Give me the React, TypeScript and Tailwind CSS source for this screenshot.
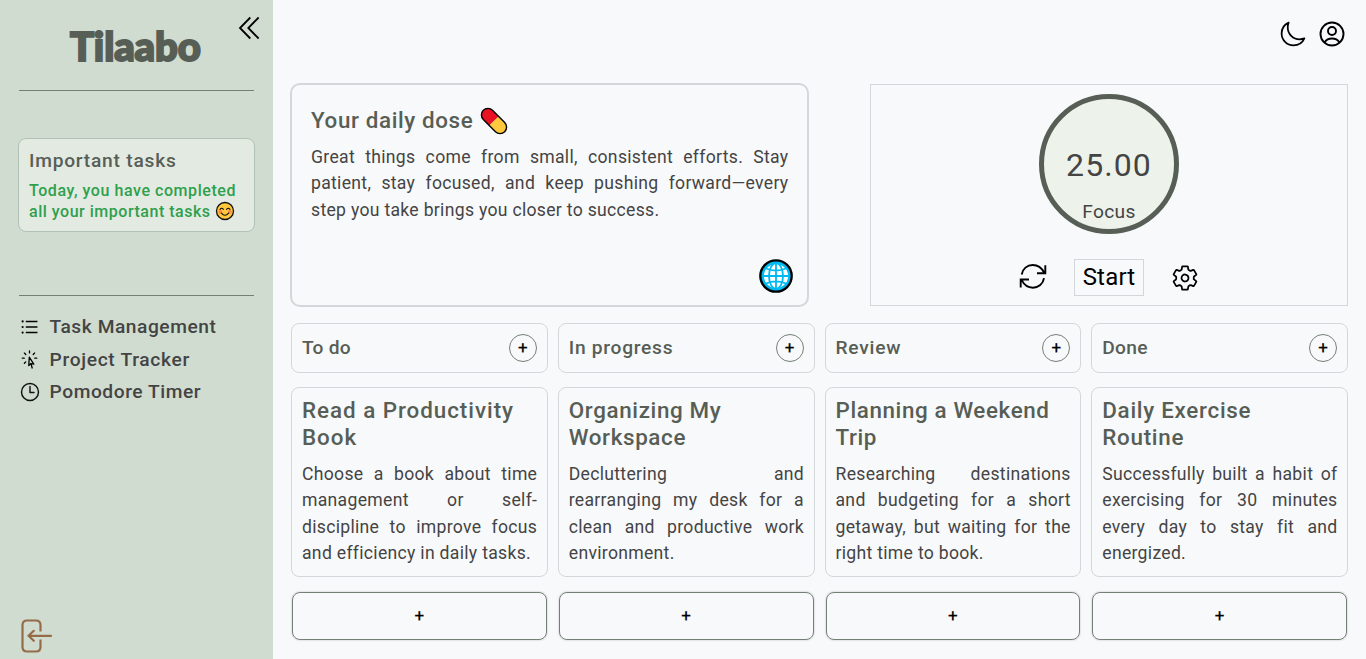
import React from 'react';
import { IoMoonOutline, IoSettingsOutline } from 'react-icons/io5';
import { HiOutlineCursorArrowRays } from 'react-icons/hi2';
import { AiOutlineUnorderedList } from 'react-icons/ai';

type Column = { name: string; nameClass: string; title: string[]; titleClass: string; lines: string[] };

const columns: Column[] = [
  {
    name: 'To do',
    nameClass: 'tracking-[0.2px]',
    title: ['Read a Productivity', 'Book'],
    titleClass: 'tracking-[0.96px]',
    lines: ['Choose a book about time', 'management or self-', 'discipline to improve focus', 'and efficiency in daily tasks.'],
  },
  {
    name: 'In progress',
    nameClass: 'tracking-[0.72px]',
    title: ['Organizing My', 'Workspace'],
    titleClass: 'tracking-[0.64px]',
    lines: ['Decluttering and', 'rearranging my desk for a', 'clean and productive work', 'environment.'],
  },
  {
    name: 'Review',
    nameClass: 'tracking-[0.75px]',
    title: ['Planning a Weekend', 'Trip'],
    titleClass: 'tracking-[0.62px]',
    lines: ['Researching destinations', 'and budgeting for a short', 'getaway, but waiting for the', 'right time to book.'],
  },
  {
    name: 'Done',
    nameClass: 'tracking-[0.3px]',
    title: ['Daily Exercise', 'Routine'],
    titleClass: 'tracking-[0.72px]',
    lines: ['Successfully built a habit of', 'exercising for 30 minutes', 'every day to stay fit and', 'energized.'],
  },
];

function Justified({ lines }: { lines: string[] }) {
  return (
    <div className="-mr-[0.5px] text-[17.6px] leading-[26.4px] tracking-[0.3px] text-[#444]">
      {lines.map((line, i) => (
        <p
          key={line}
          className={i < lines.length - 1 ? 'whitespace-nowrap text-justify [text-align-last:justify]' : 'whitespace-nowrap'}
        >
          {line}
        </p>
      ))}
    </div>
  );
}

function Pill() {
  return (
    <svg width="28" height="28" viewBox="0 0 28 28">
      <g transform="rotate(45 14 14)">
        <path d="M14 7.5H5.2a6.5 6.5 0 0 0 0 13H14Z" fill="#e81224" />
        <path d="M14 7.5h8.800a6.500 6.500 0 0 1 0 13H14Z" fill="#ffc83d" />
        <rect x="-1.100" y="7.500" width="30.200" height="13" rx="6.500" fill="none" stroke="#000" strokeWidth="1.400" />
      </g>
    </svg>
  );
}

function Smile() {
  return (
    <svg width="20" height="20" viewBox="0 0 20 20" fill="none" strokeLinecap="round">
      <circle cx="10" cy="10" r="8.5" fill="#ffc83d" stroke="#111" strokeWidth="1.3" />
      <circle cx="5.3" cy="11" r="2" fill="#f7894a" />
      <circle cx="14.7" cy="11" r="2" fill="#f7894a" />
      <path d="M5 8.4q1.7-2.2 3.4 0M11.6 8.4q1.7-2.2 3.4 0M6.4 12.2q3.6 4.2 7.2 0" stroke="#111" strokeWidth="1.1" />
    </svg>
  );
}

function Globe() {
  return (
    <svg width="34" height="34" viewBox="0 0 34 34" fill="none">
      <circle cx="17" cy="17" r="15.7" fill="#00b9f2" stroke="#000" strokeWidth="2.3" />
      <circle cx="17" cy="17" r="12.6" fill="#fff" />
      <g stroke="#00b9f2" strokeWidth="1.8">
        <circle cx="17" cy="17" r="13" />
        <ellipse cx="17" cy="17" rx="7" ry="13" />
        <path d="M17 4v26M4 17h26M6.5 9.2Q17 14 27.5 9.2M6.5 24.8Q17 20 27.5 24.8" />
      </g>
    </svg>
  );
}

function LogOut() {
  return (
    <svg width="32" height="34" viewBox="0 0 32 34" fill="none" stroke="#966b48" strokeWidth="2.2" strokeLinecap="round" strokeLinejoin="round">
      <path strokeLinecap="butt" d="M20.5 12.5V6q0-4.500-4.500-4.500H7Q2.500 1.500 2.500 6v22q0 4.500 4.500 4.500h9q4.500 0 4.500-4.500v-7.500" />
      <path d="M31 16.800H8.500M13.800 11.800l-5.300 5 5.300 5" />
    </svg>
  );
}

function Collapse() {
  return (
    <svg width="22" height="24" viewBox="0 0 22 24" fill="none" stroke="#000" strokeWidth="1.8">
      <path d="M12.300 1.500 2 12l10.300 10.500M20.600 1.500 10.300 12l10.300 10.500" />
    </svg>
  );
}

function Profile() {
  return (
    <svg width="26" height="26" viewBox="0 0 26 26" fill="none" stroke="#000" strokeWidth="1.9">
      <circle cx="13" cy="13" r="11.500" />
      <circle cx="13" cy="10" r="4" />
      <path d="M5.500 21.300Q8 17.500 13 17.500t7.500 3.800" />
    </svg>
  );
}

function Refresh() {
  return (
    <svg width="28" height="28" viewBox="0 0 28 28" fill="none" stroke="#000" strokeWidth="1.900">
      <path d="M2.700 12.500C3.500 6.800 8.200 3 13.700 3c5 0 9 2.800 11.300 7.500M26.300 3.200v8h-8.300" />
      <path d="M25 16.200c-.8 5.700-5.500 9.500-11 9.500-5 0-9-2.800-11.300-7.500M1.700 25.500v-8h8.300" />
    </svg>
  );
}

function Clock() {
  return (
    <svg width="20" height="20" viewBox="0 0 20 20" fill="none" stroke="#111" strokeWidth="1.450" strokeLinecap="round" strokeLinejoin="round">
      <circle cx="10" cy="10" r="8.500" />
      <path d="M10 4.500V10.500h4" />
    </svg>
  );
}

function Plus() {
  return (
    <span className="-mt-px text-[17px] leading-none [-webkit-text-stroke:0.2px_#000]">+</span>
  );
}

export default function App() {
  return (
    <div className="flex h-[659px] w-full overflow-hidden bg-[#f8f9fb] font-[Roboto,sans-serif] text-[#444]">
      <aside className="flex w-[273px] shrink-0 flex-col bg-[#d1dcd1] pl-[19px] pr-[13px]">
        <div className="flex h-[90px] justify-end">
          <h1 className="mr-[35px] mt-[19px] w-[133px] whitespace-nowrap font-[Lato,sans-serif] text-[40px] font-black leading-[54px] tracking-[-0.1px] text-[#575e56] [-webkit-text-stroke:2px_#575e56] [stroke-linejoin:round]">
            Tilaabo
          </h1>
          <div className="mt-[16px] shrink-0">
            <Collapse />
          </div>
        </div>
        <hr className="mr-[6px] border-[#748075]" />
        <section className="-ml-px mr-[5px] mt-[47px] h-[94px] rounded-[8px] border border-[#b2c1b5] bg-[#e3eae2] pl-[10px] pt-[8px] font-medium">
          <h2 className="text-[19.2px] leading-[27px] tracking-[0.76px] text-[#575e56]">Important tasks</h2>
          <p className="mt-[6px] whitespace-nowrap text-[16px] leading-[21px] tracking-[0.56px] text-[#2fa04c]">Today, you have completed</p>
          <p className="flex whitespace-nowrap text-[16px] leading-[21px] tracking-[0.52px] text-[#2fa04c]">
            all your important tasks
            <span className="ml-[4px]"><Smile /></span>
          </p>
        </section>
        <hr className="mr-[6px] mt-[63px] border-[#748075]" />
        <nav className="mt-[15px] flex flex-col text-[19.2px] font-medium leading-[32.6px]">
          <a className="flex items-center gap-[9.500px]">
            <AiOutlineUnorderedList className="h-[20px] w-[21px] text-black" />
            <span className="tracking-[0.54px]">Task Management</span>
          </a>
          <a className="flex items-center gap-[9.500px]">
            <HiOutlineCursorArrowRays className="h-[21px] w-[21px] text-black" />
            <span className="tracking-[0.68px]">Project Tracker</span>
          </a>
          <a className="flex items-center gap-[9.500px]">
            <span className="pl-px"><Clock /></span>
            <span className="tracking-[0.56px]">Pomodore Timer</span>
          </a>
        </nav>
        <div className="mb-[6px] ml-px mt-auto">
          <LogOut />
        </div>
      </aside>

      <main className="flex flex-1 flex-col pl-[18px] pr-[18px]">
        <header className="flex h-[83px] items-start justify-end gap-[12px] pr-[3px] pt-[20px] text-black">
          <IoMoonOutline className="h-[28px] w-[28px]" />
          <span className="mt-px"><Profile /></span>
        </header>

        <div className="flex justify-between">
          <section className="-ml-px flex h-[224px] w-[519px] flex-col rounded-[10px] border-2 border-[#d4d7d9] px-[19px] pt-[21px]">
            <h2 className="flex h-[30px] items-center gap-[7px] text-[22.4px] font-medium tracking-[0.62px] text-[#575e56]">
              Your daily dose
              <Pill />
            </h2>
            <div className="mt-[8px]">
              <Justified
                lines={[
                  'Great things come from small, consistent efforts. Stay',
                  'patient, stay focused, and keep pushing forward—every',
                  'step you take brings you closer to success.',
                ]}
              />
            </div>
            <div className="-mr-[5px] mb-[12px] mt-auto self-end">
              <Globe />
            </div>
          </section>

          <section className="mt-px flex h-[222px] w-[478px] flex-col items-center border border-[#d4d7d9] pt-[9px]">
            <div className="flex h-[140px] w-[140px] flex-col items-center rounded-full border-[5px] border-[#575e56] bg-[#edf2eb] pt-[46px]">
              <span className="text-[32px] leading-[40px] tracking-[1.1px]">25.00</span>
              <span className="mt-[15px] text-[19.2px] leading-[24px] tracking-[0.35px]">Focus</span>
            </div>
            <div className="mt-[25px] flex items-center text-black">
              <span className="-mt-[3px]"><Refresh /></span>
              <button className="ml-[27px] h-[37px] w-[70px] border border-[#d4d7d9] text-[24px] leading-[35px] tracking-[0.2px]">Start</button>
              <IoSettingsOutline className="ml-[27px] h-[28px] w-[28px]" />
            </div>
          </section>
        </div>

        <div className="mt-[16px] grid grid-cols-4 gap-[10px]">
          {columns.map((column) => (
            <section key={column.name} className="flex min-w-0 flex-col">
              <div className="flex h-[50px] items-center justify-between rounded-[8px] border border-[#d4d7d9] px-[10px]">
                <h2 className={`text-[19.2px] font-medium text-[#575e56] ${column.nameClass}`}>{column.name}</h2>
                <button className="flex h-[28px] w-[28px] items-center justify-center rounded-full border border-[#748075] text-black">
                  <Plus />
                </button>
              </div>
              <article className="mt-[14px] h-[190px] rounded-[8px] border border-[#d4d7d9] px-[10px] pt-[9px]">
                <h3 className={`text-[22.4px] font-medium leading-[27px] text-[#575e56] ${column.titleClass}`}>
                  {column.title.map((t) => (
                    <span key={t} className="block whitespace-nowrap">{t}</span>
                  ))}
                </h3>
                <div className="mt-[10px]">
                  <Justified lines={column.lines} />
                </div>
              </article>
              <button className="mx-px mt-[15px] flex h-[48px] items-center justify-center rounded-[8px] border border-[#748075] text-black shadow-[0_0_2px_#74807580]">
                <Plus />
              </button>
            </section>
          ))}
        </div>
      </main>
    </div>
  );
}
